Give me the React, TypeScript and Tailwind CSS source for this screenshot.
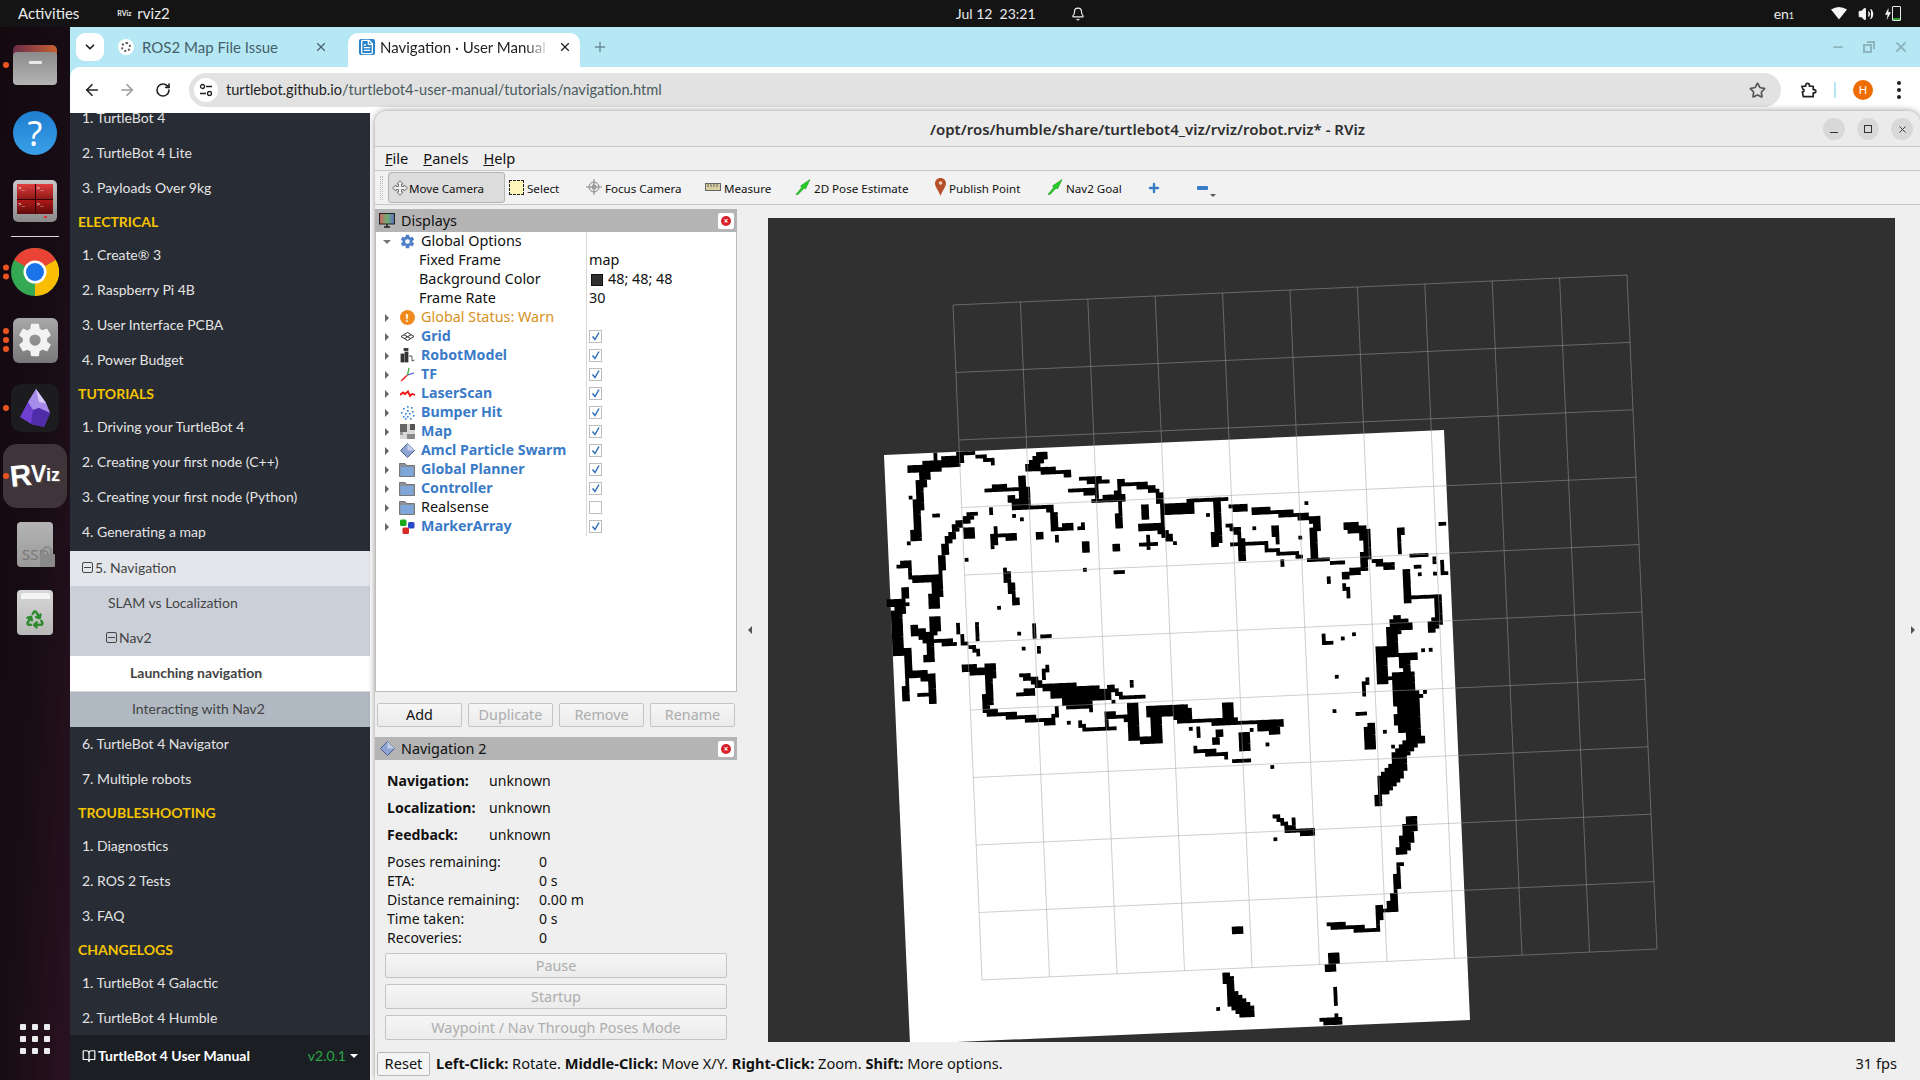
import { ArrowLeft, ArrowRight, RotateCw, Star, X, Plus, ChevronDown, Minus, Bell, Volume2, Recycle, FileText, BookOpen } from 'lucide-react'
import { IoSettingsSharp } from 'react-icons/io5'

type Stroke = number[]

// traced from the map, first value is thickness in map cells
const upper: Stroke[] = [
  [3, 110, 145, 230, 130], [1, 170, 100, 175, 130], [1, 235, 98, 265, 100, 325, 125], [3, 200, 120, 235, 115], [3, 150, 160, 130, 200, 125, 290, 120, 355],
  [1, 105, 375], [1, 105, 237], [1, 170, 285, 182, 285], [2, 275, 280, 230, 315, 205, 360, 190, 410, 185, 455],
  [3, 450, 110, 420, 140], [2, 420, 145, 520, 160], [3, 400, 180, 405, 250], [2, 370, 205, 410, 210], [2, 310, 210, 355, 200], [2, 365, 235, 385, 245],
  [2, 380, 258, 470, 262, 485, 300, 480, 330, 520, 320], [1, 320, 265, 320, 280], [1, 375, 285], [2, 395, 300], [4, 260, 340], [3, 445, 345],
  [2, 330, 325, 320, 380], [2, 340, 348, 380, 350], [2, 490, 355], [1, 552, 315, 552, 330], [3, 568, 380], [3, 645, 387], [1, 255, 423], [1, 565, 447], [1, 645, 452, 658, 452],
  [2, 555, 175, 620, 185], [2, 520, 210, 590, 215], [2, 590, 195, 590, 225], [2, 590, 240, 660, 235], [1, 650, 190, 645, 230], [2, 650, 190, 710, 195, 750, 215, 760, 240, 765, 300, 760, 330],
  [2, 655, 250, 650, 320], [3, 720, 270, 720, 290], [2, 710, 320, 760, 325, 780, 355], [1, 710, 368, 745, 368], [1, 728, 355, 728, 382], [1, 790, 345], [1, 800, 365],
  [4, 770, 270, 830, 265], [2, 830, 255, 840, 240, 930, 235], [3, 910, 250, 905, 370], [2, 945, 260, 975, 265], [2, 1000, 270, 1090, 280, 1165, 300, 1170, 320], [2, 1160, 330, 1160, 410],
  [2, 940, 318, 965, 340, 975, 415], [1, 950, 370, 1030, 372, 1040, 390, 1130, 408], [2, 1060, 330, 1065, 365], [1, 1120, 357], [1, 1000, 320], [2, 1075, 432], [1, 1140, 245], [1, 885, 280], [1, 1150, 415, 1235, 428],
  [3, 1250, 320, 1290, 330, 1300, 380, 1290, 445], [2, 1245, 465, 1290, 445], [2, 1320, 425, 1360, 440], [2, 1385, 335, 1385, 400], [1, 1410, 405, 1450, 405], [2, 1495, 313], [1, 1425, 445, 1435, 445],
  [3, 1400, 465, 1405, 540], [2, 1400, 530, 1480, 530], [3, 1480, 530, 1490, 590, 1470, 620], [1, 1495, 430, 1503, 465], [1, 1475, 410, 1475, 430], [1, 1480, 462], [1, 1440, 462], [1, 1203, 475, 1203, 490], [1, 1235, 495, 1255, 525],
  [1, 70, 440, 105, 425], [2, 100, 430, 105, 475, 185, 480], [4, 175, 480, 170, 555], [2, 95, 505, 85, 560], [2, 55, 550, 95, 550], [4, 75, 560, 70, 680], [3, 170, 605, 170, 635],
  [3, 115, 630, 160, 660, 155, 720], [2, 175, 660, 215, 670], [1, 230, 615, 240, 660, 285, 700], [2, 280, 620, 280, 655], [3, 70, 690, 100, 700, 100, 760, 160, 770, 160, 835], [2, 95, 760, 95, 830], [1, 125, 825, 160, 830],
  [2, 355, 455, 380, 545], [1, 340, 560], [1, 392, 638], [1, 430, 620, 430, 650], [1, 445, 645, 470, 645], [1, 398, 690], [1, 442, 680, 442, 692],
  [3, 250, 745, 320, 760], [3, 315, 745, 305, 870], [2, 300, 875, 470, 905], [1, 490, 865, 480, 905], [2, 400, 765, 440, 790, 470, 805], [1, 460, 745, 455, 775], [2, 385, 825, 425, 815], [5, 490, 810, 610, 825], [3, 510, 850, 575, 850],
  [2, 630, 800, 660, 830], [1, 660, 833, 715, 835], [2, 685, 790], [1, 640, 848], [1, 520, 905], [1, 575, 870], [1, 550, 905, 560, 925, 640, 930], [1, 620, 885, 615, 930], [2, 620, 885, 690, 895],
  [4, 690, 860, 690, 950], [2, 680, 955, 755, 965], [4, 745, 870, 745, 960], [4, 740, 870, 830, 880], [2, 820, 860, 820, 890], [2, 810, 900, 1070, 910], [3, 935, 855, 935, 885], [3, 1020, 920, 1065, 930],
  [1, 860, 920, 860, 950], [2, 915, 935, 905, 965], [3, 970, 945, 980, 985], [1, 995, 930, 985, 960], [2, 850, 990, 930, 1005], [2, 955, 1020, 990, 1020], [2, 1040, 975], [1, 1048, 1042], [1, 840, 930],
  [3, 1375, 600, 1410, 620], [4, 1370, 610, 1365, 700], [4, 1340, 700, 1335, 775], [2, 1360, 700, 1420, 710], [2, 1345, 775, 1400, 770], [3, 1395, 720, 1410, 790], [8, 1395, 790, 1410, 900], [3, 1380, 900, 1430, 910], [1, 1440, 825, 1455, 815],
  [3, 1410, 930, 1440, 960], [4, 1420, 960, 1380, 1010], [5, 1385, 1020, 1375, 1060], [5, 1370, 1060, 1340, 1100], [2, 1330, 1100, 1330, 1150], [4, 1310, 920, 1310, 975], [1, 1350, 930], [1, 1365, 975], [1, 1450, 960],
  [2, 1185, 650, 1190, 670], [1, 1210, 670], [1, 1235, 655], [1, 1262, 645], [1, 1222, 770], [1, 1295, 775, 1295, 820], [2, 1290, 825], [1, 1210, 870], [1, 1278, 877, 1292, 877], [1, 1450, 695], [1, 1468, 685],
]

const lower: Stroke[] = [
  [1, 1025, 290, 1060, 325], [1, 1075, 300, 1065, 325], [2, 1055, 330, 1115, 338], [1, 1022, 353], [4, 1370, 310, 1355, 370], [3, 1345, 390], [2, 1340, 430, 1330, 520], [3, 1325, 530, 1322, 565],
  [2, 1290, 565, 1285, 630], [1, 1290, 570, 1320, 570], [2, 1165, 615, 1280, 632], [3, 930, 628], [3, 1175, 710, 1165, 740], [2, 1177, 810, 1177, 848], [2, 1140, 900, 1190, 905], [1, 1178, 883],
  [3, 905, 775, 915, 810], [4, 915, 835, 960, 880], [1, 880, 868],
]

const ang = (-2.5 * Math.PI) / 180
const cell = 3.8
const ox = 884
const oy = 455

function buildMap() {
  const cells = new Set<string>()
  const stamp = (x: number, y: number, width: number) => {
    const dx = x - ox
    const dy = y - oy
    const u = (dx * Math.cos(ang) + dy * Math.sin(ang)) / cell
    const v = (-dx * Math.sin(ang) + dy * Math.cos(ang)) / cell
    // traced widths came out a bit fat, thin them
    const w = width === 1 ? 1 : width * 0.72
    const r = (w - 1) / 2
    const n = Math.ceil(2 * r)
    for (let a = 0; a <= n; a++) {
      for (let b = 0; b <= n; b++) {
        const da = n ? -r + (2 * r * a) / n : 0
        const db = n ? -r + (2 * r * b) / n : 0
        cells.add(`${Math.floor(u + da)},${Math.floor(v + db)}`)
      }
    }
  }
  const draw = (list: Stroke[], sx: number, sy: number, ty: number) => {
    list.forEach(([w, ...pts]) => {
      const xy: number[][] = []
      for (let i = 0; i < pts.length; i += 2) xy.push([870 + pts[i] / sx, ty + pts[i + 1] / sy])
      if (xy.length === 1) stamp(xy[0][0], xy[0][1], w)
      for (let i = 1; i < xy.length; i++) {
        const len = Math.hypot(xy[i][0] - xy[i - 1][0], xy[i][1] - xy[i - 1][1])
        const n = Math.ceil(len)
        for (let t = 0; t <= n; t++) stamp(xy[i - 1][0] + ((xy[i][0] - xy[i - 1][0]) * t) / n, xy[i - 1][1] + ((xy[i][1] - xy[i - 1][1]) * t) / n, w)
      }
    })
  }
  draw(upper, 2.613, 3, 420)
  draw(lower, 2.53, 3, 720)
  const ux = Math.cos(ang) * cell
  const uy = Math.sin(ang) * cell
  const vx = -Math.sin(ang) * cell
  const vy = Math.cos(ang) * cell
  let d = ''
  cells.forEach((k) => {
    const [i, j] = k.split(',').map(Number)
    const x = ox + i * ux + j * vx
    const y = oy + i * uy + j * vy
    d += `M${x.toFixed(1)} ${y.toFixed(1)}l${ux.toFixed(2)} ${uy.toFixed(2)}l${vx.toFixed(2)} ${vy.toFixed(2)}l${(-ux).toFixed(2)} ${(-uy).toFixed(2)}z`
  })
  return d
}

const mapPath = buildMap()

function MapView() {
  const lines = []
  const tl = [953, 305]
  const tr = [1627, 275]
  const br = [1657, 949]
  const bl = [982, 980]
  for (let i = 0; i <= 10; i++) {
    const t = i / 10
    lines.push(<line key={`v${i}`} x1={tl[0] + (tr[0] - tl[0]) * t} y1={tl[1] + (tr[1] - tl[1]) * t} x2={bl[0] + (br[0] - bl[0]) * t} y2={bl[1] + (br[1] - bl[1]) * t} />)
    lines.push(<line key={`h${i}`} x1={tl[0] + (bl[0] - tl[0]) * t} y1={tl[1] + (bl[1] - tl[1]) * t} x2={tr[0] + (br[0] - tr[0]) * t} y2={tr[1] + (br[1] - tr[1]) * t} />)
  }
  return (
    <svg viewBox="768 218 1127 824" className="block h-full w-full">
      <rect x="768" y="218" width="1127" height="824" fill="#303030" />
      <polygon points="884,455 1444,430 1470,1020 910,1044" fill="#ffffff" />
      <path d={mapPath} fill="#000000" />
      <g stroke="#a0a0a0" strokeOpacity="0.5" strokeWidth="1">{lines}</g>
    </svg>
  )
}

const qt = "font-['Noto_Sans',sans-serif]"

function ChromeLogo() {
  return (
    <svg viewBox="0 0 48 48" className="h-12 w-12">
      <circle cx="24" cy="24" r="24" fill="#34a853" />
      <path d="M24 24 L3.2 12 A24 24 0 0 1 44.8 12 Z" fill="#ea4335" />
      <path d="M24 24 L44.8 12 A24 24 0 0 1 24 48 Z" fill="#fbbc04" />
      <circle cx="24" cy="24" r="11.5" fill="#ffffff" />
      <circle cx="24" cy="24" r="9" fill="#1a73e8" />
    </svg>
  )
}

function Pips({ n }: { n: number }) {
  return (
    <div className="absolute left-[3px] top-1/2 flex -translate-y-1/2 flex-col gap-[3px]">
      {Array.from({ length: n }).map((_, i) => (
        <span key={i} className="h-[6px] w-[6px] rounded-full bg-[#e95420]" />
      ))}
    </div>
  )
}

function DockSlot({ pips = 0, children }: { pips?: number; children: React.ReactNode }) {
  return (
    <div className="relative flex h-[68px] w-full shrink-0 items-center justify-center">
      {pips > 0 && <Pips n={pips} />}
      {children}
    </div>
  )
}

function Dock() {
  return (
    <div className="flex h-full w-[70px] shrink-0 flex-col items-center bg-gradient-to-br from-[#14090f] via-[#170c14] to-[#2a1220] pt-[4px]">
      <DockSlot pips={1}>
        <div className="relative h-[40px] w-[44px]">
          <div className="h-[20px] w-[44px] rounded-t-[5px] bg-gradient-to-r from-[#6b2d44] to-[#c8602e]" />
          <div className="absolute bottom-0 left-0 flex h-[33px] w-[44px] justify-center rounded-[4px] bg-gradient-to-b from-[#8c8c8c] to-[#b4b4b4] pt-[9px]">
            <span className="h-[3px] w-[13px] rounded-[1px] bg-[#e8e8e8]" />
          </div>
        </div>
      </DockSlot>
      <DockSlot>
        <div className={`flex h-[44px] w-[44px] items-center justify-center rounded-full bg-gradient-to-b from-[#1f7ed0] to-[#3aa0e8] text-[34px] leading-none text-white ${qt}`}>?</div>
      </DockSlot>
      <DockSlot>
        <div className="flex h-[42px] w-[44px] flex-col rounded-[5px] bg-gradient-to-b from-[#c8c8c8] to-[#8a8a8a] p-[4px]">
          <div className="grid flex-1 grid-cols-2 gap-[1px] bg-[#300] font-['Liberation_Mono',monospace] text-[6px] leading-none text-white">
            <span className="bg-gradient-to-b from-[#e04040] to-[#901818] pl-[1px] pt-[2px]">&gt;_</span>
            <span className="bg-gradient-to-b from-[#e04040] to-[#901818] pl-[1px] pt-[2px]">&gt;_</span>
            <span className="bg-gradient-to-b from-[#b01818] to-[#600c0c] pl-[1px] pt-[2px]">&gt;_</span>
            <span className="bg-gradient-to-b from-[#b01818] to-[#600c0c] pl-[1px] pt-[2px]">&gt;_</span>
          </div>
          <div className="mt-[2px] flex justify-end pr-[6px]">
            <span className="h-[2px] w-[3px] bg-[#e03030]" />
          </div>
        </div>
      </DockSlot>
      <div className="my-[1px] h-[1px] w-[48px] shrink-0 bg-[#d8d8d8]" />
      <DockSlot pips={2}>
        <ChromeLogo />
      </DockSlot>
      <DockSlot pips={3}>
        <div className="flex h-[45px] w-[45px] items-center justify-center rounded-[6px] bg-gradient-to-b from-[#a8a8a8] to-[#787878]">
          <IoSettingsSharp className="h-[36px] w-[36px] text-[#f2f2f2]" />
        </div>
      </DockSlot>
      <DockSlot pips={1}>
        <div className="flex h-[48px] w-[48px] items-center justify-center rounded-[10px] bg-[#1c1c1e]">
          <svg viewBox="0 0 32 40" className="h-[40px] w-[32px]">
            <polygon points="17,1 27,15 31,25 25,39 12,36 1,29 9,14" fill="#6f3fd0" />
            <polygon points="17,1 27,15 31,25 20,20 14,22 9,14" fill="#a78be8" />
            <polygon points="17,1 27,15 20,14" fill="#d8ccf6" />
            <polygon points="14,22 20,20 31,25 25,39 12,36" fill="#4f2ca8" />
          </svg>
        </div>
      </DockSlot>
      <DockSlot pips={1}>
        <div className="flex h-[64px] w-[64px] items-center justify-center rounded-[14px] bg-[#3f3439]">
          <span className="flex items-center font-['Liberation_Sans',sans-serif] font-bold leading-none text-white [text-shadow:1px_1px_0_#555]">
            <span className="-rotate-6 text-[30px]">R</span>
            <span className="-ml-[1px] -mt-[4px] text-[23px]">V</span>
            <span className="-mt-[2px] text-[18px]">iz</span>
          </span>
        </div>
      </DockSlot>
      <DockSlot>
        <div className={`relative flex h-[45px] w-[36px] items-end rounded-[4px] bg-gradient-to-b from-[#b4b4b4] to-[#9a9a9a] pb-[5px] pl-[5px] text-[15px] leading-none text-[#777] ${qt}`}>
          SSD
          <span className="absolute bottom-[10px] right-[1px] h-[11px] w-[10px] rounded-t-[5px] border-2 border-[#8a8a8a]" />
          <span className="absolute -right-[2px] bottom-0 h-[13px] w-[15px] rounded-[1px] bg-[#8a8a8a]" />
        </div>
      </DockSlot>
      <DockSlot>
        <div className="flex h-[45px] w-[36px] flex-col items-center rounded-[4px] bg-gradient-to-b from-[#d8d8d8] to-[#b8b8b8] pt-[3px]">
          <span className="h-[6px] w-[29px] rounded-t-[3px] bg-[#f4f4f4]" />
          <Recycle className="mt-[10px] h-[20px] w-[20px] text-[#2e8b2e]" strokeWidth={3} />
        </div>
      </DockSlot>
      <div className="mt-auto mb-[26px] grid grid-cols-3 gap-x-[6px] gap-y-[6px]">
        {Array.from({ length: 9 }).map((_, i) => (
          <span key={i} className="h-[6px] w-[6px] rounded-[1px] bg-[#ececec]" />
        ))}
      </div>
    </div>
  )
}

function TopBar() {
  return (
    <div className="flex h-[27px] shrink-0 items-center bg-[#141414] font-['Lato',sans-serif] text-[15px] text-[#ececec]">
      <span className="ml-[18px]">Activities</span>
      <span className="ml-[38px] w-[16px] text-[7px] font-bold leading-none">RViz</span>
      <span className="ml-[4px]">rviz2</span>
      <div className="ml-[776px] flex w-[100px] justify-center text-[14px]">Jul 12&nbsp;&nbsp;23:21</div>
      <Bell className="ml-[-1px] h-[14px] w-[14px] translate-x-[26px]" />
      <span className="ml-[715px] text-[14px]">en<span className="text-[9px]">1</span></span>
      <svg viewBox="0 0 16 12" className="ml-[37px] h-[13px] w-[16px]">
        <path d="M0 2 Q8 -3 16 2 L8 12 Z" fill="#f4f4f4" />
      </svg>
      <Volume2 className="ml-[11px] h-[16px] w-[16px]" fill="#f4f4f4" />
      <div className="ml-[11px] flex items-center">
        <svg viewBox="0 0 7 14" className="h-[12px] w-[6px]">
          <path d="M4 0 L0 8 H3 L2 14 L7 5 H4 Z" fill="#f4f4f4" />
        </svg>
        <div className="relative ml-[1px] h-[15px] w-[9px] rounded-[1px] border border-[#e8e8e8]">
          <span className="absolute bottom-0 left-0 h-[2px] w-full bg-[#2fa32f]" />
        </div>
      </div>
    </div>
  )
}

function TabStrip() {
  return (
    <div className="flex h-[40px] shrink-0 items-end bg-[#b5e8f4] font-['Lato',sans-serif] text-[15px]">
      <div className="mb-[6px] ml-[6px] flex h-[28px] w-[28px] items-center justify-center rounded-[9px] bg-white">
        <ChevronDown className="h-[14px] w-[14px] text-[#222]" strokeWidth={3} />
      </div>
      <div className="ml-[14px] flex h-[34px] w-[230px] items-center pb-[6px] text-[#45606a]">
        <span className="flex h-[16px] w-[16px] items-center justify-center rounded-full bg-white">
          <span className="h-[10px] w-[10px] rounded-full border-2 border-dotted border-[#555]" />
        </span>
        <span className="ml-[8px] w-[172px]">ROS2 Map File Issue</span>
        <X className="h-[14px] w-[14px] text-[#45606a]" />
      </div>
      <div className="flex h-[34px] w-[232px] items-center rounded-t-[10px] bg-white pb-[6px] pl-[10px] text-[#222]">
        <FileText className="ml-[1px] h-[16px] w-[16px] rounded-[2px] bg-[#2a82c8] text-white" />
        <span className="ml-[5px] w-[170px] overflow-hidden whitespace-nowrap [mask-image:linear-gradient(to_right,black_85%,transparent)]">Navigation · User Manual</span>
        <X className="ml-[8px] h-[14px] w-[14px]" />
      </div>
      <Plus className="mb-[12px] ml-[12px] h-[16px] w-[16px] text-[#6a8a94]" />
      <div className="mb-[12px] ml-auto flex items-center gap-[18px] pr-[11px] text-[#8fb5bf]">
        <Minus className="h-[14px] w-[14px]" strokeWidth={3} />
        <svg viewBox="0 0 12 12" className="h-[12px] w-[12px]" fill="none" stroke="currentColor" strokeWidth="2">
          <path d="M4 1 H11 V8 M1 4 H8 V11 H1 Z" />
        </svg>
        <X className="h-[16px] w-[16px]" strokeWidth={3} />
      </div>
    </div>
  )
}

function ChromeToolbar() {
  return (
    <div className="flex h-[46px] shrink-0 items-center rounded-tl-[10px] bg-white font-['Lato',sans-serif]">
      <ArrowLeft className="ml-[13px] h-[18px] w-[18px] text-[#222]" strokeWidth={2.2} />
      <ArrowRight className="ml-[17px] h-[18px] w-[18px] text-[#9a9a9a]" strokeWidth={2.2} />
      <RotateCw className="ml-[19px] h-[16px] w-[16px] text-[#222]" strokeWidth={2.4} />
      <div className="ml-[18px] flex h-[34px] w-[1592px] items-center rounded-full bg-[#e2e2e2]">
        <div className="ml-[5px] flex h-[24px] w-[24px] items-center justify-center rounded-full bg-white">
          <svg viewBox="0 0 14 14" className="h-[14px] w-[14px]" fill="none" stroke="#222" strokeWidth="1.3">
            <circle cx="3.5" cy="3.5" r="2" />
            <path d="M7 3.5 H13 M1 10.5 H7" />
            <circle cx="10.5" cy="10.5" r="2" />
          </svg>
        </div>
        <span className="ml-[8px] pb-[1px] text-[14.6px] text-[#4a5a60]">
          <span className="text-[#222]">turtlebot.github.io</span>/turtlebot4-user-manual/tutorials/navigation.html
        </span>
        <Star className="ml-auto mr-[15px] h-[17px] w-[17px] text-[#555]" strokeWidth={2.4} />
      </div>
      <svg viewBox="0 0 18 18" className="ml-[19px] h-[17px] w-[17px]" fill="none" stroke="#222" strokeWidth="1.8" strokeLinejoin="round">
        <path d="M2 4.5 H6 V3.5 A2 2 0 0 1 10 3.5 V4.5 H14 V8 H15 A1.6 1.6 0 0 1 15 11.5 H14 V15.5 H3.5 L2.5 10.5 A1.5 1.5 0 0 0 3 7.5 Z" />
      </svg>
      <span className="ml-[17px] h-[16px] w-[2px] bg-[#b5e8f4]" />
      <span className="ml-[17px] flex h-[20px] w-[20px] items-center justify-center rounded-full bg-[#ef6c00] text-[11px] text-white">H</span>
      <span className="ml-[24px] flex flex-col gap-[3px]">
        <span className="h-[4px] w-[4px] rounded-full bg-[#222]" />
        <span className="h-[4px] w-[4px] rounded-full bg-[#222]" />
        <span className="h-[4px] w-[4px] rounded-full bg-[#222]" />
      </span>
    </div>
  )
}

type NavRow = { t: string; kind?: 'head' | 'nav' | 'slam' | 'nav2' | 'launch' | 'inter' }

const navRows: NavRow[] = [
  { t: '1. TurtleBot 4' }, { t: '2. TurtleBot 4 Lite' }, { t: '3. Payloads Over 9kg' },
  { t: 'ELECTRICAL', kind: 'head' },
  { t: '1. Create® 3' }, { t: '2. Raspberry Pi 4B' }, { t: '3. User Interface PCBA' }, { t: '4. Power Budget' },
  { t: 'TUTORIALS', kind: 'head' },
  { t: '1. Driving your TurtleBot 4' }, { t: '2. Creating your first node (C++)' }, { t: '3. Creating your first node (Python)' }, { t: '4. Generating a map' },
  { t: '5. Navigation', kind: 'nav' }, { t: 'SLAM vs Localization', kind: 'slam' }, { t: 'Nav2', kind: 'nav2' },
  { t: 'Launching navigation', kind: 'launch' }, { t: 'Interacting with Nav2', kind: 'inter' },
  { t: '6. TurtleBot 4 Navigator' }, { t: '7. Multiple robots' },
  { t: 'TROUBLESHOOTING', kind: 'head' },
  { t: '1. Diagnostics' }, { t: '2. ROS 2 Tests' }, { t: '3. FAQ' },
  { t: 'CHANGELOGS', kind: 'head' },
  { t: '1. TurtleBot 4 Galactic' }, { t: '2. TurtleBot 4 Humble' },
]

function MinusBox() {
  return (
    <span className="mr-[2px] flex h-[11px] w-[11px] items-center justify-center rounded-[2px] border border-[#444]">
      <span className="h-[1px] w-[7px] bg-[#444]" />
    </span>
  )
}

function NavItem({ t, kind }: NavRow) {
  if (kind === 'head') return <div className="flex h-[32px] items-center pl-[8px] text-[14px] font-bold text-[#f5c400]">{t}</div>
  if (kind === 'nav')
    return (
      <div className="mt-[2px] flex h-[35px] items-center bg-[#e3e6ea] pb-[3px] pl-[12px] text-[#444]">
        <MinusBox />
        {t}
      </div>
    )
  if (kind === 'slam') return <div className="flex h-[35px] items-center bg-[#cbd0d8] pb-[3px] pl-[38px] text-[#444]">{t}</div>
  if (kind === 'nav2')
    return (
      <div className="flex h-[35px] items-center bg-[#cbd0d8] pb-[3px] pl-[36px] text-[#444]">
        <MinusBox />
        {t}
      </div>
    )
  if (kind === 'launch') return <div className="flex h-[36px] items-center border-b border-[#d8d8d8] bg-white pb-[2px] pl-[60px] font-bold text-[#444]">{t}</div>
  if (kind === 'inter') return <div className="-mb-[1px] flex h-[35px] items-center bg-[#b0b8c1] pb-[2px] pl-[62px] text-[#444]">{t}</div>
  return <div className="flex h-[35px] items-center pl-[12px] text-[#e4e4e4]">{t}</div>
}

function Sidebar() {
  return (
    <div className="flex w-[300px] shrink-0 flex-col bg-[#282c34] font-['Lato',sans-serif] text-[14px]">
      <div className="-mt-[13px] min-h-0 flex-1">
        {navRows.map((r) => (
          <NavItem key={r.t} {...r} />
        ))}
      </div>
      <div className="relative flex h-[45px] shrink-0 items-center bg-[#1b1f24] pb-[4px] pl-[12px] pr-[12px] text-white">
        <BookOpen className="h-[14px] w-[14px]" />
        <span className="ml-[2px] font-bold">TurtleBot 4 User Manual</span>
        <span className="ml-auto mr-[-1px] text-[#28a745]">v2.0.1</span>
        <span className="ml-[5px] h-0 w-0 border-x-[4px] border-t-[4px] border-x-transparent border-t-white" />
      </div>
    </div>
  )
}

function Caret({ open }: { open?: boolean }) {
  if (open) return <span className="h-0 w-0 border-x-[4px] border-t-[4px] border-x-transparent border-t-[#777]" />
  return <span className="h-0 w-0 border-y-[4px] border-l-[4px] border-y-transparent border-l-[#666]" />
}

function GearIcon() {
  return <IoSettingsSharp className="h-[15px] w-[15px] text-[#4f7fc8]" />
}

function TreeIcon({ name }: { name: string }) {
  switch (name) {
    case 'warn':
      return (
        <span className="flex h-[15px] w-[15px] items-center justify-center rounded-full bg-[#f08a1c] text-[11px] font-bold leading-none text-white">!</span>
      )
    case 'grid':
      return (
        <svg viewBox="0 0 15 15" className="h-[15px] w-[15px]" fill="none" stroke="#333" strokeWidth="1">
          <path d="M1 7.5 L7.5 3.5 L14 7.5 L7.5 11.5 Z M4 5.8 L10.8 9.6 M11 5.8 L4.2 9.6" />
        </svg>
      )
    case 'robot':
      return (
        <svg viewBox="0 0 15 15" className="h-[15px] w-[15px]" fill="#333" stroke="#333" strokeWidth="0.8">
          <rect x="4" y="0.5" width="4" height="2" />
          <rect x="1" y="6" width="3" height="8" />
          <rect x="5" y="4" width="3" height="10" />
          <path d="M9 8 L12 8 L12 13 L14.5 12" fill="none" />
        </svg>
      )
    case 'tf':
      return (
        <svg viewBox="0 0 15 15" className="h-[15px] w-[15px]" fill="none" strokeWidth="1.2">
          <path d="M7.5 8 L1 14" stroke="#e03030" />
          <path d="M7.5 8 L14 6" stroke="#3050e0" />
          <path d="M7.5 8 L9 1" stroke="#30b030" />
          <path d="M3 13 L6 9" stroke="#e03030" />
        </svg>
      )
    case 'laser':
      return (
        <svg viewBox="0 0 15 15" className="h-[15px] w-[15px]" fill="none" stroke="#f01010" strokeWidth="1.8">
          <path d="M0 9 L3 6.5 L5 8 L8 5.5 L10 10 L12 8 L15 9" />
        </svg>
      )
    case 'bumper':
      return (
        <svg viewBox="0 0 15 15" className="h-[15px] w-[15px]" fill="#2f80d8">
          {[[7, 1], [11, 2], [3, 3], [7, 5], [12, 6], [1, 7], [5, 8], [9, 8], [13, 10], [3, 11], [7, 11], [10, 13], [5, 13]].map(([x, y], i) => (
            <rect key={i} x={x} y={y} width="1.6" height="1.6" />
          ))}
        </svg>
      )
    case 'map':
      return (
        <svg viewBox="0 0 15 15" className="h-[15px] w-[15px]">
          <rect width="15" height="15" fill="#d8d8d8" />
          <rect width="7" height="8" fill="#666" />
          <rect x="10" width="5" height="6" fill="#555" />
          <rect x="7" y="10" width="8" height="5" fill="#888" />
          <rect y="8" width="3" height="3" fill="#999" />
        </svg>
      )
    case 'amcl':
      return (
        <svg viewBox="0 0 15 15" className="h-[15px] w-[15px]">
          <polygon points="7.5,0.5 14.5,7.5 7.5,14.5 0.5,7.5" fill="#8fa4d0" stroke="#4a5f90" />
          <polygon points="7.5,0.5 14.5,7.5 7.5,7.5" fill="#c4d0e8" />
        </svg>
      )
    case 'folder':
      return (
        <svg viewBox="0 0 16 15" className="h-[15px] w-[16px]">
          <path d="M0.5 1.5 H6 L8 3.5 H15.5 V14.5 H0.5 Z" fill="#8a8f98" stroke="#555" strokeWidth="0.7" />
          <rect x="1.5" y="5" width="13" height="9" fill="#7ea6d8" />
        </svg>
      )
    case 'marker':
      return (
        <svg viewBox="0 0 16 16" className="h-[16px] w-[16px]">
          <rect x="1" y="0.5" width="6.5" height="6.5" rx="1.5" fill="#18a818" />
          <rect x="9" y="3" width="6.5" height="6.5" rx="1.5" fill="#2848c8" />
          <rect x="3.5" y="8.5" width="6.5" height="6.5" rx="1.5" fill="#d82828" />
        </svg>
      )
    default:
      return null
  }
}

const displays = [
  { name: 'Grid', icon: 'grid', on: true },
  { name: 'RobotModel', icon: 'robot', on: true },
  { name: 'TF', icon: 'tf', on: true },
  { name: 'LaserScan', icon: 'laser', on: true },
  { name: 'Bumper Hit', icon: 'bumper', on: true },
  { name: 'Map', icon: 'map', on: true },
  { name: 'Amcl Particle Swarm', icon: 'amcl', on: true },
  { name: 'Global Planner', icon: 'folder', on: true },
  { name: 'Controller', icon: 'folder', on: true },
  { name: 'Realsense', icon: 'folder', on: false },
  { name: 'MarkerArray', icon: 'marker', on: true },
]

function Check({ on }: { on: boolean }) {
  return (
    <span className="flex h-[13px] w-[13px] items-center justify-center border border-[#bdbdbd] bg-white">
      {on && (
        <svg viewBox="0 0 11 11" className="h-[11px] w-[11px]" fill="none" stroke="#2f6fb8" strokeWidth="1.5">
          <path d="M2.5 5.5 L5 8.5 L9 1.5" />
        </svg>
      )}
    </span>
  )
}

function TreeRow({ left, right }: { left: React.ReactNode; right?: React.ReactNode }) {
  return (
    <div className="flex h-[19px]">
      <div className="flex w-[211px] shrink-0 items-center border-r border-[#d8d8d8]">{left}</div>
      <div className="flex flex-1 items-center pl-[2px]">{right}</div>
    </div>
  )
}

function PanelHeader({ icon, title }: { icon: React.ReactNode; title: string }) {
  return (
    <div className="flex h-[23px] items-center bg-[#b4b4b4] text-[14.4px] text-[#111]">
      <span className="ml-[3px] flex w-[18px] justify-center">{icon}</span>
      <span className="ml-[5px]">{title}</span>
      <span className="ml-auto mr-[3px] flex h-[16px] w-[16px] items-center justify-center rounded-[2px] bg-white">
        <span className="flex h-[10px] w-[10px] items-center justify-center rounded-full bg-[#d81f26] text-[8px] font-bold leading-none text-white">×</span>
      </span>
    </div>
  )
}

function QtButton({ children, off, className = '' }: { children: React.ReactNode; off?: boolean; className?: string }) {
  return (
    <div className={`flex items-center justify-center rounded-[2px] border border-[#c4c4c4] bg-gradient-to-b from-[#f6f6f6] to-[#ebebeb] ${off ? 'text-[#adadad]' : 'text-[#111]'} ${className}`}>
      {children}
    </div>
  )
}

function DisplaysPanel() {
  return (
    <div className="mt-[4px]">
      <PanelHeader
        title="Displays"
        icon={
          <svg viewBox="0 0 16 15" className="h-[15px] w-[16px]">
            <rect x="0.5" y="0.5" width="15" height="10.5" fill="url(#mon)" stroke="#222" />
            <path d="M5 14 H11 M8 11 V14" stroke="#222" strokeWidth="1.5" />
            <defs>
              <linearGradient id="mon" x1="0" x2="1">
                <stop offset="0" stopColor="#d06060" />
                <stop offset="0.5" stopColor="#70b070" />
                <stop offset="1" stopColor="#6070c0" />
              </linearGradient>
            </defs>
          </svg>
        }
      />
      <div className="h-[460px] border-x border-b border-[#bdbdbd] bg-white text-[14.4px] leading-none text-[#111]">
        <TreeRow
          left={
            <>
              <span className="ml-[7px] flex w-[8px] justify-center"><Caret open /></span>
              <span className="ml-[8px] flex w-[16px] justify-center"><GearIcon /></span>
              <span className="ml-[6px]">Global Options</span>
            </>
          }
        />
        <TreeRow left={<span className="ml-[43px]">Fixed Frame</span>} right="map" />
        <TreeRow
          left={<span className="ml-[43px]">Background Color</span>}
          right={
            <>
              <span className="ml-[2px] h-[12px] w-[12px] border border-[#111] bg-[#303030]" />
              <span className="ml-[5px]">48; 48; 48</span>
            </>
          }
        />
        <TreeRow left={<span className="ml-[43px]">Frame Rate</span>} right="30" />
        <TreeRow
          left={
            <>
              <span className="ml-[7px] flex w-[8px] justify-center"><Caret /></span>
              <span className="ml-[8px] flex w-[16px] justify-center"><TreeIcon name="warn" /></span>
              <span className="ml-[6px] text-[#d8921c]">Global Status: Warn</span>
            </>
          }
        />
        {displays.map((d) => (
          <TreeRow
            key={d.name}
            left={
              <>
                <span className="ml-[7px] flex w-[8px] justify-center"><Caret /></span>
                <span className="ml-[8px] flex w-[16px] justify-center"><TreeIcon name={d.icon} /></span>
                <span className={`ml-[6px] ${d.on ? 'text-[14.2px] font-bold text-[#3a7bc8]' : ''}`}>{d.name}</span>
              </>
            }
            right={<Check on={d.on} />}
          />
        ))}
      </div>
    </div>
  )
}

function NavPanel() {
  const status = ['Navigation:', 'Localization:', 'Feedback:']
  const stats = [
    ['Poses remaining:', '0'], ['ETA:', '0 s'], ['Distance remaining:', '0.00 m'], ['Time taken:', '0 s'], ['Recoveries:', '0'],
  ]
  return (
    <div className="mt-[10px]">
      <PanelHeader
        title="Navigation 2"
        icon={
          <svg viewBox="0 0 15 15" className="h-[15px] w-[15px]">
            <polygon points="7.5,0.5 14.5,7.5 7.5,14.5 0.5,7.5" fill="#8fa4d0" stroke="#4a5f90" />
            <polygon points="7.5,0.5 14.5,7.5 7.5,7.5" fill="#c4d0e8" />
          </svg>
        }
      />
      <div className="px-[12px] pt-[7px] text-[14.1px] text-[#111]">
        {status.map((s) => (
          <div key={s} className="flex h-[27px] items-center">
            <span className="w-[102px] font-bold">{s}</span>
            <span>unknown</span>
          </div>
        ))}
        <div className="mt-[4px]">
          {stats.map(([a, b]) => (
            <div key={a} className="flex h-[19px] items-center">
              <span className="w-[152px]">{a}</span>
              <span>{b}</span>
            </div>
          ))}
        </div>
      </div>
      <div className="mt-[6px] flex flex-col gap-[6px] px-[10px] text-[14.35px]">
        <QtButton off className="h-[25px]">Pause</QtButton>
        <QtButton off className="h-[25px]">Startup</QtButton>
        <QtButton off className="h-[25px]">Waypoint / Nav Through Poses Mode</QtButton>
      </div>
    </div>
  )
}

function ToolIcon({ name }: { name: string }) {
  switch (name) {
    case 'move':
      return (
        <svg viewBox="0 0 16 16" className="h-[16px] w-[16px]" fill="#eee" stroke="#777">
          <path d="M8 0.5 L11 4 H9.5 V6.5 H12 V5 L15.5 8 L12 11 V9.5 H9.5 V12 H11 L8 15.5 L5 12 H6.5 V9.5 H4 V11 L0.5 8 L4 5 V6.5 H6.5 V4 H5 Z" />
        </svg>
      )
    case 'select':
      return <span className="h-[15px] w-[15px] border border-dashed border-[#222] bg-[#fcf6b8]" />
    case 'focus':
      return (
        <svg viewBox="0 0 16 16" className="h-[16px] w-[16px]" fill="none" stroke="#888">
          <circle cx="8" cy="8" r="5" fill="#e8e8e8" />
          <path d="M8 0 V16 M0 8 H16" />
          <circle cx="8" cy="8" r="2" />
        </svg>
      )
    case 'measure':
      return (
        <svg viewBox="0 0 16 8" className="h-[8px] w-[16px]">
          <rect x="0.5" y="0.5" width="15" height="7" fill="#d8cfa0" stroke="#666" />
          <path d="M3 1 V4 M6 1 V4 M9 1 V4 M12 1 V4" stroke="#666" />
        </svg>
      )
    case 'arrow':
      return (
        <svg viewBox="0 0 16 16" className="h-[16px] w-[16px]">
          <path d="M1 15.5 L7 8 L5.5 7 L15 0.5 L10.5 10 L9.2 9 L3 15.5 Z" fill="#22d022" stroke="#108010" strokeWidth="0.5" />
        </svg>
      )
    case 'pin':
      return (
        <svg viewBox="0 0 11 18" className="h-[18px] w-[11px]">
          <path d="M5.5 0 C9 0 11 2.5 11 5.5 C11 9 7 13 5.5 18 C4 13 0 9 0 5.5 C0 2.5 2 0 5.5 0 Z" fill="#b5502a" />
          <circle cx="5.5" cy="5" r="1.8" fill="#f0d0c0" />
        </svg>
      )
    default:
      return null
  }
}

const tools = [
  { w: 77, icon: 'select', t: 'Select' },
  { w: 119, icon: 'focus', t: 'Focus Camera' },
  { w: 90, icon: 'measure', t: 'Measure' },
  { w: 140, icon: 'arrow', t: '2D Pose Estimate' },
  { w: 112, icon: 'pin', t: 'Publish Point' },
  { w: 101, icon: 'arrow', t: 'Nav2 Goal' },
]

function QtToolbar() {
  return (
    <div className="flex h-[35px] shrink-0 items-center border-y border-[#c8c8c8] bg-[#f2f2f2] text-[11.6px] text-[#111]">
      <span className="ml-[5px] h-[24px] w-[3px] border-x border-dotted border-[#bbb]" />
      <div className="ml-[5px] mr-[4px] flex h-[31px] w-[117px] items-center rounded-[3px] border border-[#b4b4b4] bg-[#dcdcdc] pl-[3px]">
        <ToolIcon name="move" />
        <span className="ml-[1px] pt-[2px]">Move Camera</span>
      </div>
      {tools.map((x) => (
        <div key={x.t} style={{ width: x.w }} className="flex items-center gap-[2px]">
          <ToolIcon name={x.icon} />
          <span className="ml-[1px] pt-[2px]">{x.t}</span>
        </div>
      ))}
      <div className="h-[14px] w-[49px]">
        <Plus className="-ml-[1px] h-[14px] w-[14px] text-[#3a7bc8]" strokeWidth={4} />
      </div>
      <div className="flex items-center">
        <span className="h-[4px] w-[11px] rounded-[1px] bg-[#3a7bc8]" />
        <span className="ml-[2px] mt-[16px] h-0 w-0 border-x-[3px] border-t-[3px] border-x-transparent border-t-[#555]" />
      </div>
    </div>
  )
}

function RvizWindow() {
  return (
    <div className={`-mt-[2px] ml-[5px] flex min-w-0 flex-1 flex-col rounded-t-[12px] bg-[#efefef] shadow-[0_0_7px_rgba(0,0,0,0.45)] ${qt}`}>
      <div className="relative flex h-[36px] shrink-0 items-center justify-center rounded-t-[12px] border-b border-[#c8c8c8] bg-[#ebebeb] pt-[1px] text-[15px] font-semibold text-[#2e2e2e]">
        /opt/ros/humble/share/turtlebot4_viz/rviz/robot.rviz* - RViz
        <div className="absolute right-[7px] top-[7px] flex gap-[12px] text-[#333]">
          <span className="flex h-[22px] w-[22px] items-center justify-center rounded-full bg-[#d8d8d8]"><span className="mt-[7px] h-[1px] w-[8px] bg-[#333]" /></span>
          <span className="flex h-[22px] w-[22px] items-center justify-center rounded-full bg-[#d8d8d8]"><span className="h-[8px] w-[8px] border border-[#333]" /></span>
          <span className="flex h-[22px] w-[22px] items-center justify-center rounded-full bg-[#d8d8d8]"><X className="h-[11px] w-[11px]" /></span>
        </div>
      </div>
      <div className="flex h-[23px] shrink-0 items-center gap-[15px] pl-[10px] text-[14.6px] text-[#111]">
        <span><span className="underline">F</span>ile</span>
        <span><span className="underline">P</span>anels</span>
        <span><span className="underline">H</span>elp</span>
      </div>
      <QtToolbar />
      <div className="flex min-h-0 flex-1">
        <div className="w-[362px] shrink-0">
          <DisplaysPanel />
          <div className="mt-[11px] flex justify-between px-[2px] text-[14.35px]">
            <QtButton className="h-[24px] w-[85px]">Add</QtButton>
            <QtButton off className="h-[24px] w-[85px]">Duplicate</QtButton>
            <QtButton off className="h-[24px] w-[85px]">Remove</QtButton>
            <QtButton off className="h-[24px] w-[85px]">Rename</QtButton>
          </div>
          <NavPanel />
        </div>
        <div className="flex w-[31px] shrink-0 items-center pl-[11px] pt-[12px]">
          <span className="h-0 w-0 border-y-[4px] border-r-[4px] border-y-transparent border-r-[#555]" />
        </div>
        <div className="mt-[13px] h-[824px] w-[1127px] shrink-0">
          <MapView />
        </div>
        <div className="flex flex-1 items-center justify-end pr-[5px] pt-[12px]">
          <span className="h-0 w-0 border-y-[4px] border-l-[4px] border-y-transparent border-l-[#555]" />
        </div>
      </div>
      <div className="flex h-[37px] shrink-0 items-center pl-[2px] pt-[5px] text-[14.6px] text-[#111]">
        <div className="flex h-[24px] w-[53px] items-center justify-center rounded-[2px] border border-[#b8b8b8] bg-[#f4f4f4]">Reset</div>
        <span className="ml-[6px]">
          <b>Left-Click:</b> Rotate. <b>Middle-Click:</b> Move X/Y. <b>Right-Click:</b> Zoom. <b>Shift:</b> More options.
        </span>
        <span className="ml-auto mr-[23px]">31 fps</span>
      </div>
    </div>
  )
}

export default function App() {
  return (
    <div className="flex h-[1080px] w-[1920px] flex-col overflow-hidden bg-[#170c14]">
      <TopBar />
      <div className="flex min-h-0 flex-1">
        <Dock />
        <div className="flex min-w-0 flex-1 flex-col bg-[#b5e8f4]">
          <TabStrip />
          <ChromeToolbar />
          <div className="flex min-h-0 flex-1 bg-white">
            <Sidebar />
            <RvizWindow />
          </div>
        </div>
      </div>
    </div>
  )
}
